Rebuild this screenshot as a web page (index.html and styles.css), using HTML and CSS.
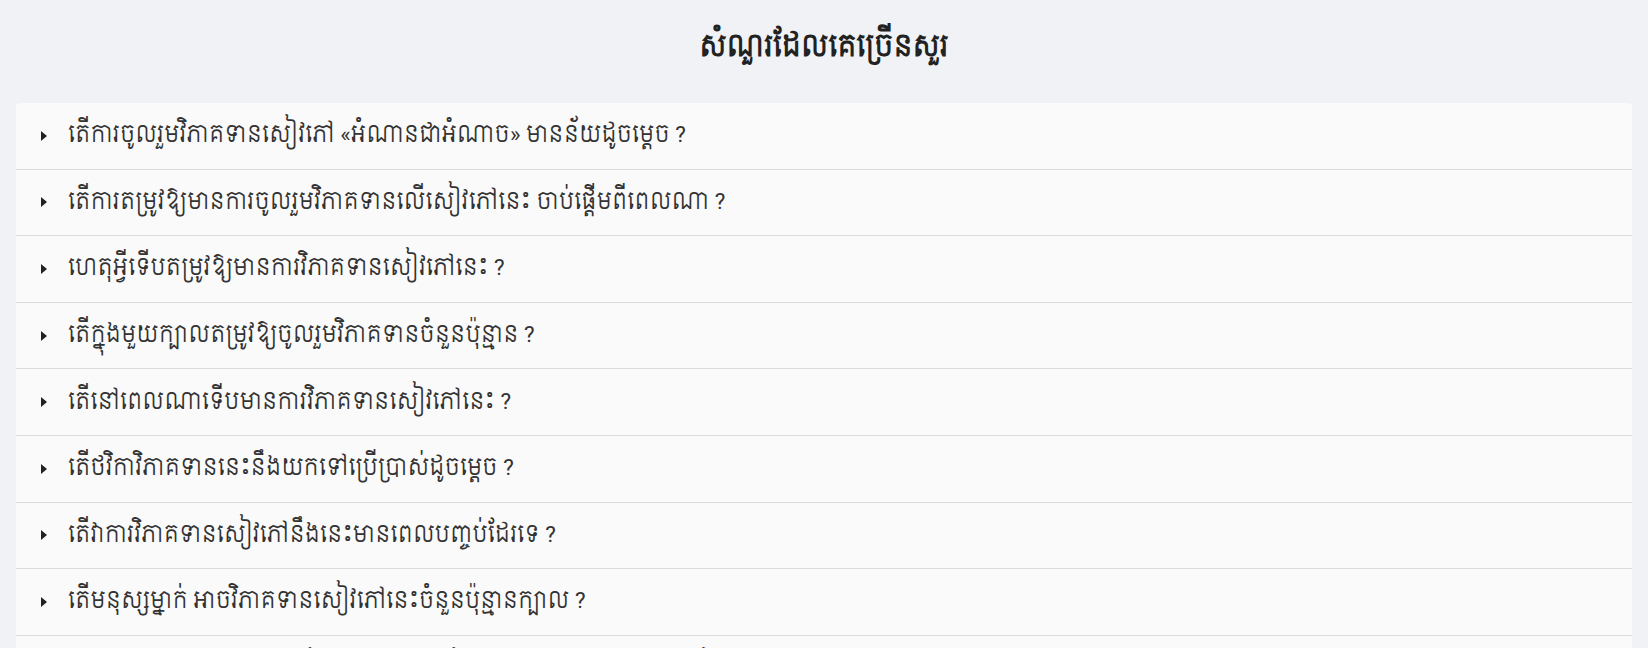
FILE: index.html
```html
<!DOCTYPE html>
<html lang="km">
<head>
<meta charset="utf-8">
<title>សំណួរដែលគេច្រើនសួរ</title>
<link rel="stylesheet" href="styles.css">
</head>
<body>
<main class="faq">
  <h2 class="faq-title">សំណួរដែលគេច្រើនសួរ</h2>
  <div class="faq-list">
    <details class="faq-item"><summary class="faq-q">តើការចូលរួមវិភាគទានសៀវភៅ «អំណានជាអំណាច» មានន័យដូចម្តេច ?</summary></details>
    <details class="faq-item"><summary class="faq-q">តើការតម្រូវឱ្យមានការចូលរួមវិភាគទានលើសៀវភៅនេះ ចាប់ផ្តើមពីពេលណា ?</summary></details>
    <details class="faq-item"><summary class="faq-q">ហេតុអ្វីទើបតម្រូវឱ្យមានការវិភាគទានសៀវភៅនេះ ?</summary></details>
    <details class="faq-item"><summary class="faq-q">តើក្នុងមួយក្បាលតម្រូវឱ្យចូលរួមវិភាគទានចំនួនប៉ុន្មាន ?</summary></details>
    <details class="faq-item"><summary class="faq-q">តើនៅពេលណាទើបមានការវិភាគទានសៀវភៅនេះ ?</summary></details>
    <details class="faq-item"><summary class="faq-q">តើថវិកាវិភាគទាននេះនឹងយកទៅប្រើប្រាស់ដូចម្តេច ?</summary></details>
    <details class="faq-item"><summary class="faq-q">តើវាការវិភាគទានសៀវភៅនឹងនេះមានពេលបញ្ចប់ដែរទេ ?</summary></details>
    <details class="faq-item"><summary class="faq-q">តើមនុស្សម្នាក់ អាចវិភាគទានសៀវភៅនេះចំនួនប៉ុន្មានក្បាល ?</summary></details>
    <details class="faq-item"><summary class="faq-q">តើខ្ញុំអាចចូលរួមវិភាគទានសៀវភៅនេះតាមរបៀបណាខ្លះដើម្បីទទួលបានសៀវភៅ ?</summary></details>
  </div>
</main>
</body>
</html>
```

FILE: styles.css
```css
* { box-sizing: border-box; }

html, body {
  margin: 0;
  padding: 0;
  background: #f0f2f5;
}

body {
  font-family: Roboto, "Siemreap", "Noto Sans", sans-serif;
  color: #333;
}

.faq {
  padding: 0 16px;
}

.faq-title {
  margin: 0;
  padding: 27px 0 36px;
  text-align: center;
  font-size: 28px;
  line-height: 40px;
  font-weight: 700;
  color: #222;
}

.faq-list {
  background: #fafafa;
  border-radius: 4px;
  overflow: hidden;
}

.faq-item {
  border-bottom: 1px solid #dcdcdc;
}

.faq-q {
  list-style: none;
  display: flex;
  align-items: center;
  gap: 21px;
  height: 65.6px;
  padding: 0 16px 0 25px;
  font-size: 22.4px;
  color: #333;
  cursor: pointer;
}

.faq-q::-webkit-details-marker { display: none; }

.faq-q::before {
  content: "";
  flex: none;
  width: 0;
  height: 0;
  border-left: 6px solid #222;
  border-top: 5px solid transparent;
  border-bottom: 5px solid transparent;
}
```
